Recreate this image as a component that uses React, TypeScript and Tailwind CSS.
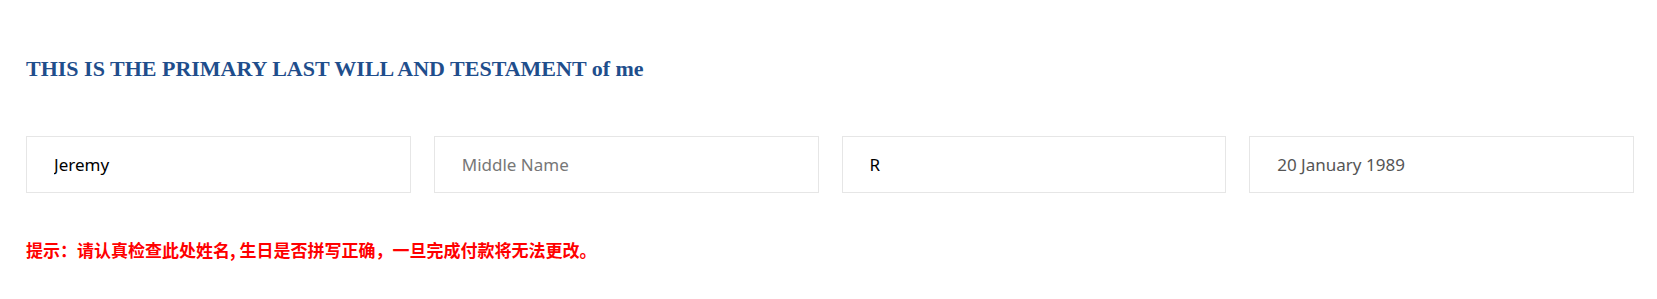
export default function App() {
  return (
    <div className="min-h-screen bg-white px-[26px] pr-[23px]">
      {/* 标题 */}
      <h1 className="pt-[56px] text-[22px] font-bold leading-[26px] text-[#1f4e8c] [font-family:'Liberation_Serif',serif]">
        THIS IS THE PRIMARY LAST WILL AND TESTAMENT of me
      </h1>

      {/* 姓名与生日 */}
      <div className="mt-[54px] grid grid-cols-4 gap-[23px] [font-family:'Noto_Sans','Noto_Sans_CJK_SC',sans-serif]">
        <input
          defaultValue="Jeremy"
          className="h-[57px] border border-[#e6e6e6] px-[27px] text-[17px] text-black outline-none"
        />
        <input
          placeholder="Middle Name"
          className="h-[57px] border border-[#e6e6e6] px-[27px] text-[17px] text-black outline-none placeholder:text-[#777]"
        />
        <input
          defaultValue="R"
          className="h-[57px] border border-[#e6e6e6] px-[27px] text-[17px] text-black outline-none"
        />
        <input
          defaultValue="20 January 1989"
          className="h-[57px] border border-[#e6e6e6] px-[27px] text-[17px] text-[#555] outline-none"
        />
      </div>

      {/* 提示 */}
      <p className="mt-[46px] text-[17px] font-bold leading-[22px] text-[#ff0000] [font-family:'Noto_Sans_CJK_SC',sans-serif]">
        提示：请认真检查此处姓名, 生日是否拼写正确，一旦完成付款将无法更改。
      </p>
    </div>
  );
}
